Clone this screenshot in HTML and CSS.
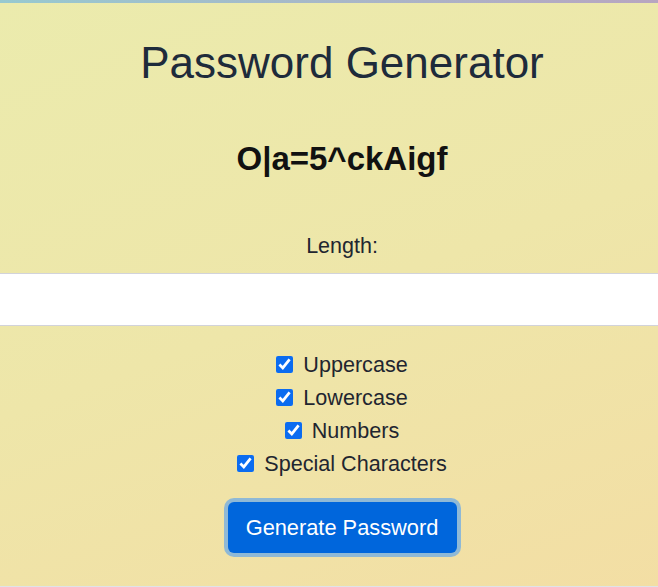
FILE: index.html
```html
<!DOCTYPE html>
<html lang="en">
<head>
<meta charset="utf-8">
<title>Password Generator</title>
<link rel="stylesheet" href="styles.css">
</head>
<body>
<div class="topbar"></div>
<main class="app">
  <h1 class="title">Password Generator</h1>
  <h2 class="password">O|a=5^ckAigf</h2>
  <label class="length-label" for="length">Length:</label>
  <input class="length-input" id="length" type="number" value="">
  <div class="options">
    <label class="option"><input type="checkbox" checked><span>Uppercase</span></label>
    <label class="option"><input type="checkbox" checked><span>Lowercase</span></label>
    <label class="option"><input type="checkbox" checked><span>Numbers</span></label>
    <label class="option"><input type="checkbox" checked><span>Special Characters</span></label>
  </div>
  <button class="generate" type="button">Generate Password</button>
</main>
</body>
</html>
```

FILE: styles.css
```css
html, body {
  margin: 0;
  padding: 0;
  overflow: hidden;
  background: #dfe3e9;
}

body {
  width: 684px;
  height: 586px;
  font-family: "Liberation Sans", Arial, sans-serif;
  color: #1f2630;
  background: linear-gradient(160deg, #ebebad 0%, #eee6a9 50%, #f3dea4 100%);
  display: flex;
  flex-direction: column;
}

.topbar {
  height: 3px;
  background: linear-gradient(to right, #97c9d0, #b9a4c0);
  flex: none;
}

.app {
  display: flex;
  flex-direction: column;
  align-items: center;
  text-align: center;
}

.title {
  margin: 35px 0 0;
  font-size: 44px;
  line-height: 50px;
  font-weight: normal;
  color: #1e2b3b;
}

.password {
  margin: 51px 0 0;
  font-size: 33px;
  line-height: 40px;
  font-weight: bold;
  color: #111;
}

.length-label {
  margin-top: 54px;
  font-size: 21.5px;
  line-height: 26px;
  color: #1f2630;
}

.length-input {
  margin-top: 14px;
  width: 100%;
  height: 53px;
  box-sizing: border-box;
  border: 1px solid #d2d3da;
  border-left: none;
  border-right: none;
  background: #fff;
  font-size: 21px;
  padding: 0 10px;
  outline: none;
}

.options {
  margin-top: 22px;
  display: flex;
  flex-direction: column;
  align-items: center;
}

.option {
  display: flex;
  align-items: center;
  gap: 10px;
  height: 33px;
  font-size: 21.6px;
  color: #1f2630;
}

.option input {
  width: 17px;
  height: 17px;
  margin: 0;
  accent-color: #0b6cf0;
}

.generate {
  margin-top: 22px;
  width: 229px;
  height: 51px;
  border: none;
  border-radius: 6px;
  background: #0066dc;
  color: #fff;
  font-family: "Liberation Sans", Arial, sans-serif;
  font-size: 21.8px;
  box-shadow: 0 0 0 4px #8fb9d6;
  cursor: pointer;
}
```
